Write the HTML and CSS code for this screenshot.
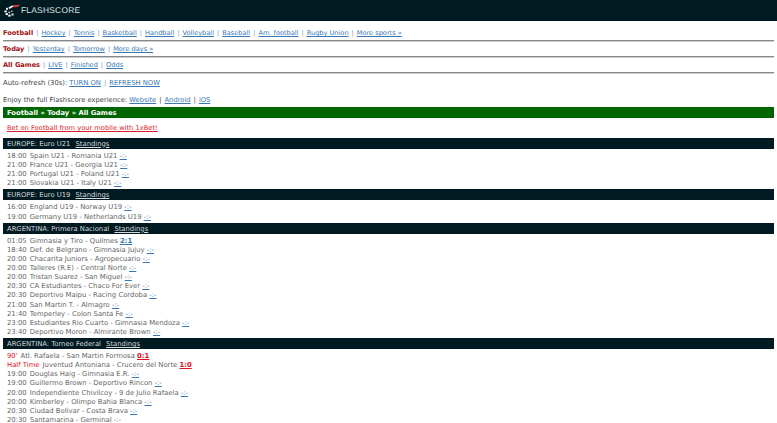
FILE: index.html
```html
<!DOCTYPE html>
<html lang="en">
<head>
<meta charset="utf-8">
<title>Flashscore</title>
<link rel="stylesheet" href="styles.css">
</head>
<body>
<header class="top">
  <svg class="logo-mark" width="17" height="13" viewBox="0 0 21 17">
    <path d="M5 5 Q8 1.5 12.5 1.5 L10 4.5 Q8.5 4.5 7 6.5 Z" fill="#fff"/>
    <path d="M12.5 1.5 L21 0.5 L17.5 3.5 L10.5 4.5 Z" fill="#e8323c"/>
    <rect x="2" y="5" width="2.5" height="2.5" fill="#fff"/>
    <rect x="0" y="8.5" width="3" height="2.5" fill="#fff"/>
    <rect x="1.5" y="12" width="3" height="2.5" fill="#fff"/>
    <rect x="5" y="14" width="3" height="2.5" fill="#fff"/>
    <rect x="9" y="12.5" width="3" height="2.5" fill="#ddd"/>
    <rect x="5" y="10" width="2.5" height="2" fill="#ccc"/>
    <rect x="8.5" y="8.5" width="2" height="2" fill="#aaa"/>
  </svg>
  <span class="logo-text">FLASHSCORE</span>
</header>

<nav class="menu ruled">
  <b class="on">Football</b><i>|</i><a href="#">Hockey</a><i>|</i><a href="#">Tennis</a><i>|</i><a href="#">Basketball</a><i>|</i><a href="#">Handball</a><i>|</i><a href="#">Volleyball</a><i>|</i><a href="#">Baseball</a><i>|</i><a href="#">Am. football</a><i>|</i><a href="#">Rugby Union</a><i>|</i><a href="#">More sports »</a>
</nav>
<nav class="menu ruled">
  <b class="on">Today</b><i>|</i><a href="#">Yesterday</a><i>|</i><a href="#">Tomorrow</a><i>|</i><a href="#">More days »</a>
</nav>
<nav class="menu ruled">
  <b class="on">All Games</b><i>|</i><a href="#">LIVE</a><i>|</i><a href="#">Finished</a><i>|</i><a href="#">Odds</a>
</nav>
<p class="info refresh">Auto-refresh (30s): <a href="#">TURN ON</a><i>|</i><a href="#">REFRESH NOW</a></p>
<p class="info enjoy">Enjoy the full Flashscore experience: <a href="#">Website</a><i class="dark">|</i><a href="#">Android</a><i class="dark">|</i><a href="#">iOS</a></p>

<h1 class="title">Football » Today » All Games</h1>
<p class="bet"><a href="#">Bet on Football from your mobile with 1xBet!</a></p>

<main class="games">
  <h2 class="league">EUROPE: Euro U21 <a href="#">Standings</a></h2>
  <ul class="rows">
    <li><span class="t">18:00</span>Spain U21 - Romania U21 <a href="#">-:-</a></li>
    <li><span class="t">21:00</span>France U21 - Georgia U21 <a href="#">-:-</a></li>
    <li><span class="t">21:00</span>Portugal U21 - Poland U21 <a href="#">-:-</a></li>
    <li><span class="t">21:00</span>Slovakia U21 - Italy U21 <a href="#">-:-</a></li>
  </ul>
  <h2 class="league">EUROPE: Euro U19 <a href="#">Standings</a></h2>
  <ul class="rows">
    <li><span class="t">16:00</span>England U19 - Norway U19 <a href="#">-:-</a></li>
    <li><span class="t">19:00</span>Germany U19 - Netherlands U19 <a href="#">-:-</a></li>
  </ul>
  <h2 class="league">ARGENTINA: Primera Nacional <a href="#">Standings</a></h2>
  <ul class="rows">
    <li><span class="t">01:05</span>Gimnasia y Tiro - Quilmes <a class="score" href="#">2:1</a></li>
    <li><span class="t">18:40</span>Def. de Belgrano - Gimnasia Jujuy <a href="#">-:-</a></li>
    <li><span class="t">20:00</span>Chacarita Juniors - Agropecuario <a href="#">-:-</a></li>
    <li><span class="t">20:00</span>Talleres (R.E) - Central Norte <a href="#">-:-</a></li>
    <li><span class="t">20:00</span>Tristan Suarez - San Miguel <a href="#">-:-</a></li>
    <li><span class="t">20:30</span>CA Estudiantes - Chaco For Ever <a href="#">-:-</a></li>
    <li><span class="t">20:30</span>Deportivo Maipu - Racing Cordoba <a href="#">-:-</a></li>
    <li><span class="t">21:00</span>San Martin T. - Almagro <a href="#">-:-</a></li>
    <li><span class="t">21:40</span>Temperley - Colon Santa Fe <a href="#">-:-</a></li>
    <li><span class="t">23:00</span>Estudiantes Rio Cuarto - Gimnasia Mendoza <a href="#">-:-</a></li>
    <li><span class="t">23:40</span>Deportivo Moron - Almirante Brown <a href="#">-:-</a></li>
  </ul>
  <h2 class="league">ARGENTINA: Torneo Federal <a href="#">Standings</a></h2>
  <ul class="rows">
    <li><span class="t live">90'</span>Atl. Rafaela - San Martin Formosa <a class="score live" href="#">0:1</a></li>
    <li><span class="t live">Half Time</span>Juventud Antoniana - Crucero del Norte <a class="score live" href="#">1:0</a></li>
    <li><span class="t">19:00</span>Douglas Haig - Gimnasia E.R. <a href="#">-:-</a></li>
    <li><span class="t">19:00</span>Guillermo Brown - Deportivo Rincon <a href="#">-:-</a></li>
    <li><span class="t">20:00</span>Independiente Chivilcoy - 9 de Julio Rafaela <a href="#">-:-</a></li>
    <li><span class="t">20:00</span>Kimberley - Olimpo Bahia Blanca <a href="#">-:-</a></li>
    <li><span class="t">20:30</span>Ciudad Bolivar - Costa Brava <a href="#">-:-</a></li>
    <li><span class="t">20:30</span>Santamarina - Germinal <a href="#">-:-</a></li>
  </ul>
</main>
</body>
</html>
```
FILE: styles.css
```css
html { overflow: hidden; }
body {
  margin: 0;
  background: #fff;
  color: #444;
  font: 6.8px/9.1px "DejaVu Sans", Verdana, sans-serif;
  text-rendering: geometricPrecision;
}
a { color: #3a78b5; text-decoration: underline; }
i { font-style: normal; color: #7d9bb5; margin: 0 3px; }
i.dark { color: #444; }
.top {
  height: 21px;
  background: #001a22;
  display: flex;
  align-items: center;
  padding-left: 4px;
  gap: 0;
}
.logo-text {
  color: #dfe4e6;
  font: 8.4px/1 "Liberation Sans", Arial, sans-serif;
  letter-spacing: 0.25px;
}
.menu {
  margin: 0 3px;
  padding: 4px 0 2px;
  border-bottom: 1px solid #888;
  box-shadow: 0 1px 0 #ccc;
  font-size: 6.6px;
}
.menu:first-of-type { padding-top: 8px; }
.info { margin: 0; padding: 0 3px; }
.refresh { padding-top: 6px; }
.enjoy { padding-top: 8px; font-size: 6.75px; }
.on { color: #a01313; }
.title {
  margin: 2px 3px 0;
  padding: 1.5px 4px 0;
  height: 9.5px;
  background: #006400;
  color: #fff;
  font-size: 6.8px;
  line-height: 9.5px;
  font-weight: 700;
}
.bet { margin: 0; padding: 6px 7px 4px; font-size: 6.7px; }
.bet a { color: #d81e28; }
.league {
  margin: 0 3px;
  padding: 1px 4px 0;
  height: 10px;
  background: #001a22;
  color: #d5d9db;
  font-size: 6.8px;
  line-height: 10px;
  font-weight: 400;
}
.league a { color: #d5d9db; margin-left: 3px; }
.rows { list-style: none; margin: 0; padding: 3.2px 7px 1.1px; color: #666; font-size: 6.85px; }
.rows li { height: 9.1px; white-space: nowrap; }
.t { margin-right: 3px; }
.score { font-weight: 700; }
.live { color: #e0141e; }
```
